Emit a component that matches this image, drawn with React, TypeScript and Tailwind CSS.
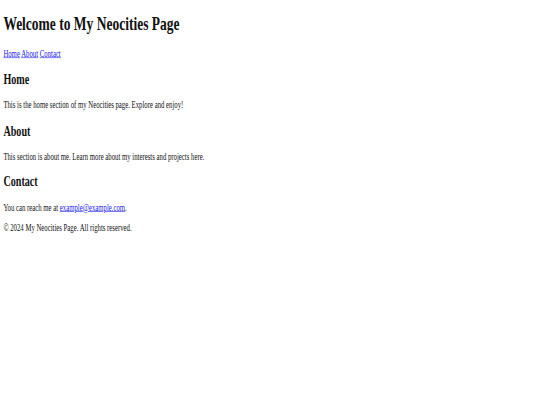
import React from 'react';

const sections = [
  { title: 'Home', text: 'This is the home section of my Neocities page. Explore and enjoy!' },
  { title: 'About', text: 'This section is about me. Learn more about my interests and projects here.' },
];

const linkCls = 'text-[#2020ee] underline';

export default function App() {
  return (
    <div className="w-[540px] h-[405px] overflow-hidden bg-white">
      {/* page was captured at 1280x675 and squeezed into the frame */}
      <div
        className="w-[1280px] h-[675px] origin-top-left scale-x-[0.421875] scale-y-[0.605] px-2 text-[#111] text-[16px] leading-[normal]"
        style={{ fontFamily: '"Liberation Serif", "Times New Roman", serif' }}
      >
        <div className="flow-root">
          <h1 className="text-[32px] font-bold my-[21.44px]">Welcome to My Neocities Page</h1>
          <nav>
            <a href="#home" className={linkCls}>Home</a>{' '}
            <a href="#about" className={linkCls}>About</a>{' '}
            <a href="#contact" className={linkCls}>Contact</a>
          </nav>
          {sections.map((s) => (
            <section key={s.title}>
              <h2 className="text-[24px] font-bold my-[19.92px]">{s.title}</h2>
              <p className="my-4">{s.text}</p>
            </section>
          ))}
          <section>
            <h2 className="text-[24px] font-bold my-[19.92px]">Contact</h2>
            <p className="my-4">
              You can reach me at <a href="mailto:example@example.com" className={linkCls}>example@example.com</a>.
            </p>
          </section>
          <footer>
            <p className="my-4">© 2024 My Neocities Page. All rights reserved.</p>
          </footer>
        </div>
      </div>
    </div>
  );
}
